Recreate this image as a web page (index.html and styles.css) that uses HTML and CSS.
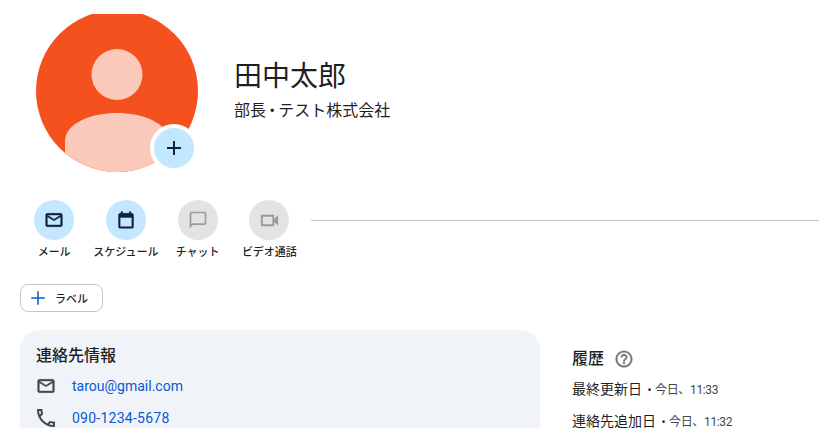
FILE: index.html
```html
<!DOCTYPE html>
<html lang="ja">
  <head>
    <meta charset="UTF-8" />
    <title>田中太郎</title>
    <link rel="stylesheet" href="styles.css">
  </head>
  <body>
    <header class="profile">
      <div class="avatar">
        <svg class="avatar-pic" width="162" height="158" viewBox="0 4 162 158">
          <defs>
            <clipPath id="round"><circle cx="81" cy="81" r="81" /></clipPath>
          </defs>
          <circle cx="81" cy="81" r="81" fill="#f4511e" />
          <circle cx="81" cy="64.500" r="25.500" fill="#fbc9ba" />
          <path d="M29 162V131C29 113 56 103 81 103S133 113 133 131V162Z" fill="#fbc9ba" clip-path="url(#round)" />
        </svg>
        <button class="avatar-add">
          <svg width="24" height="24" viewBox="0 0 24 24"><path d="M19 13h-6v6h-2v-6H5v-2h6V5h2v6h6v2z" fill="#0e2238" /></svg>
        </button>
      </div>
      <div class="who">
        <h1>田中太郎</h1>
        <p>部長 • テスト株式会社</p>
      </div>
    </header>

    <nav class="actions">
      <div class="action">
        <span class="dot">
          <svg class="bold" width="24" height="24" viewBox="0 0 24 24"><path d="M20 4H4c-1.100 0-2 .9-2 2v12c0 1.100.9 2 2 2h16c1.100 0 2-.9 2-2V6c0-1.100-.9-2-2-2zm0 14H4V8l8 5 8-5v10zm-8-7L4 6h16l-8 5z" fill="#0e2238" /></svg>
        </span>
        <span class="action-name">メール</span>
      </div>
      <div class="action">
        <span class="dot">
          <svg class="bold" width="24" height="24" viewBox="0 0 24 24"><path d="M19 4h-1V2h-2v2H8V2H6v2H5c-1.100 0-2 .9-2 2v14c0 1.100.9 2 2 2h14c1.100 0 2-.9 2-2V6c0-1.100-.9-2-2-2zm0 16H5V9h14v11z" fill="#0e2238" /></svg>
        </span>
        <span class="action-name">スケジュール</span>
      </div>
      <div class="action">
        <span class="dot off">
          <svg width="24" height="24" viewBox="0 0 24 24"><path d="M20 2H4c-1.100 0-2 .9-2 2v18l4-4h14c1.100 0 2-.9 2-2V4c0-1.100-.9-2-2-2zm0 14H5.200L4 17.200V4h16v12z" fill="#9a9a9a" /></svg>
        </span>
        <span class="action-name">チャット</span>
      </div>
      <div class="action">
        <span class="dot off">
          <svg class="video" width="24" height="24" viewBox="0 0 24 24"><path d="M17 10.500V7c0-.55-.45-1-1-1H4c-.55 0-1 .45-1 1v10c0 .55.45 1 1 1h12c.55 0 1-.45 1-1v-3.500l4 4v-11l-4 4zM15 16H5V8h10v8z" fill="#9a9a9a" /></svg>
        </span>
        <span class="action-name">ビデオ通話</span>
      </div>
      <div class="rule"></div>
    </nav>

    <button class="label-btn">
      <svg width="18" height="18" viewBox="0 0 24 24"><path d="M21 13h-8v8h-2v-8H3v-2h8V3h2v8h8v2z" fill="#0b57d0" /></svg>
      ラベル
    </button>

    <main class="columns">
      <section class="card">
        <h2>連絡先情報</h2>
        <div class="row">
          <svg class="mail" width="20" height="20" viewBox="0 0 24 24"><path d="M20 4H4c-1.100 0-2 .9-2 2v12c0 1.100.9 2 2 2h16c1.100 0 2-.9 2-2V6c0-1.100-.9-2-2-2zm0 14H4V8l8 5 8-5v10zm-8-7L4 6h16l-8 5z" fill="#444746" /></svg>
          <a>tarou@gmail.com</a>
        </div>
        <div class="row">
          <svg class="phone" width="24" height="24" viewBox="0 0 24 24"><path d="M6.540 5c.06.890.21 1.760.45 2.590l-1.200 1.200c-.41-1.200-.67-2.470-.76-3.790h1.510m9.860 12.020c.85.24 1.720.39 2.600.45v1.490c-1.320-.09-2.590-.35-3.800-.75l1.200-1.190M7.500 3H4c-.55 0-1 .45-1 1 0 9.390 7.610 17 17 17 .55 0 1-.45 1-1v-3.490c0-.55-.45-1-1-1-1.240 0-2.450-.2-3.570-.57-.1-.04-.21-.05-.31-.05-.26 0-.51.1-.71.29l-2.200 2.200c-2.830-1.450-5.150-3.760-6.590-6.590l2.200-2.200c.28-.28.36-.67.25-1.020C8.700 6.450 8.500 5.250 8.500 4c0-.55-.45-1-1-1z" fill="#444746" /></svg>
          <a class="tel">090-1234-5678</a>
        </div>
      </section>
      <section class="history">
        <h2>履歴
          <svg width="20" height="20" viewBox="0 0 24 24"><path d="M11 18h2v-2h-2v2zm1-16C6.480 2 2 6.480 2 12s4.480 10 10 10 10-4.480 10-10S17.520 2 12 2zm0 18c-4.410 0-8-3.590-8-8s3.590-8 8-8 8 3.590 8 8-3.590 8-8 8zm0-14c-2.210 0-4 1.790-4 4h2c0-1.100.9-2 2-2s2 .9 2 2c0 2-3 1.750-3 5h2c0-2.250 3-2.500 3-5 0-2.210-1.790-4-4-4z" fill="#757575" stroke="#757575" stroke-width="0.4" /></svg>
        </h2>
        <p class="log">最終更新日 <span class="sep">•</span> <small>今日、11:33</small></p>
        <p class="log">連絡先追加日 <span class="sep">•</span> <small>今日、11:32</small></p>
      </section>
    </main>
  </body>
</html>
```

FILE: styles.css
```css
* {
  box-sizing: border-box;
}

html,
body {
  height: 100%;
  overflow: hidden;
}

body {
  margin: 0;
  padding-top: 14px;
  background: #ffffff;
  color: #1f1f1f;
  font-family: Roboto, "Noto Sans CJK JP", sans-serif;
}

h1,
h2,
p {
  margin: 0;
  font-weight: 400;
}

.profile {
  display: flex;
  align-items: center;
  gap: 36px;
  padding-left: 36px;
}

.avatar {
  position: relative;
  width: 162px;
  height: 158px;
}

.avatar-pic {
  display: block;
}

.avatar-add {
  position: absolute;
  right: 0;
  bottom: 0;
  width: 48px;
  height: 48px;
  display: flex;
  align-items: center;
  justify-content: center;
  padding: 0;
  border: 4px solid #ffffff;
  border-radius: 50%;
  background: #c2e7ff;
}

.who {
  padding-bottom: 4px;
}

.who h1 {
  font-size: 28px;
  line-height: 36px;
}

.who p {
  margin-top: 4px;
  font-size: 16px;
  line-height: 24px;
  word-spacing: -0.5px;
}

.actions {
  display: flex;
  margin-top: 28px;
  padding-left: 18.25px;
}

.action {
  width: 71.75px;
  display: flex;
  flex-direction: column;
  align-items: center;
  gap: 4px;
}

.dot {
  width: 40px;
  height: 40px;
  display: flex;
  align-items: center;
  justify-content: center;
  border-radius: 50%;
  background: #c2e7ff;
}

.dot svg {
  width: 20px;
  height: 20px;
}

.dot svg.video {
  width: 23px;
  height: 23px;
}

.dot svg.bold path {
  stroke: #0e2238;
  stroke-width: 0.5;
}

.dot.off {
  background: #e3e3e3;
}

.action-name {
  font-size: 11px;
  font-weight: 500;
  line-height: 18px;
  white-space: nowrap;
}

.rule {
  flex: 1;
  height: 1px;
  margin: 20px 0 0 5.75px;
  background: #c4c7c5;
}

.label-btn {
  display: flex;
  align-items: center;
  gap: 8px;
  width: 83px;
  height: 28px;
  margin: 22px 0 0 20px;
  padding: 0 0 0 8px;
  border: 1px solid #c4c7c5;
  border-radius: 8px;
  background: #ffffff;
  color: #1f1f1f;
  font-family: inherit;
  font-size: 11px;
  font-weight: 500;
}

.columns {
  display: flex;
  gap: 32px;
  margin: 18px 0 0 20px;
}

.card {
  width: 520px;
  height: 200px;
  padding: 15px 16px;
  border-radius: 20px;
  background: #f0f4f9;
}

.card h2,
.history h2 {
  font-size: 16px;
  font-weight: 500;
  line-height: 22px;
}

.row {
  display: flex;
  align-items: center;
  gap: 16px;
  height: 32px;
  font-size: 14px;
}

.card h2 + .row {
  margin-top: 3px;
}

.row a {
  color: #0b57d0;
}

.row a.tel {
  letter-spacing: 0.25px;
}

.mail path {
  stroke: #444746;
  stroke-width: 0.5;
}

.phone {
  margin: 0 -2px;
}

.history {
  padding-top: 18px;
}

.history h2 {
  display: flex;
  align-items: center;
  gap: 10px;
}

.log {
  margin-top: 10px;
  font-size: 14px;
  line-height: 21px;
}

.history h2 + .log {
  margin-top: 9px;
}

.log small {
  font-size: 12px;
  letter-spacing: -0.35px;
  color: #444746;
}

.sep {
  margin-left: 2px;
  font-size: 12px;
}
```
